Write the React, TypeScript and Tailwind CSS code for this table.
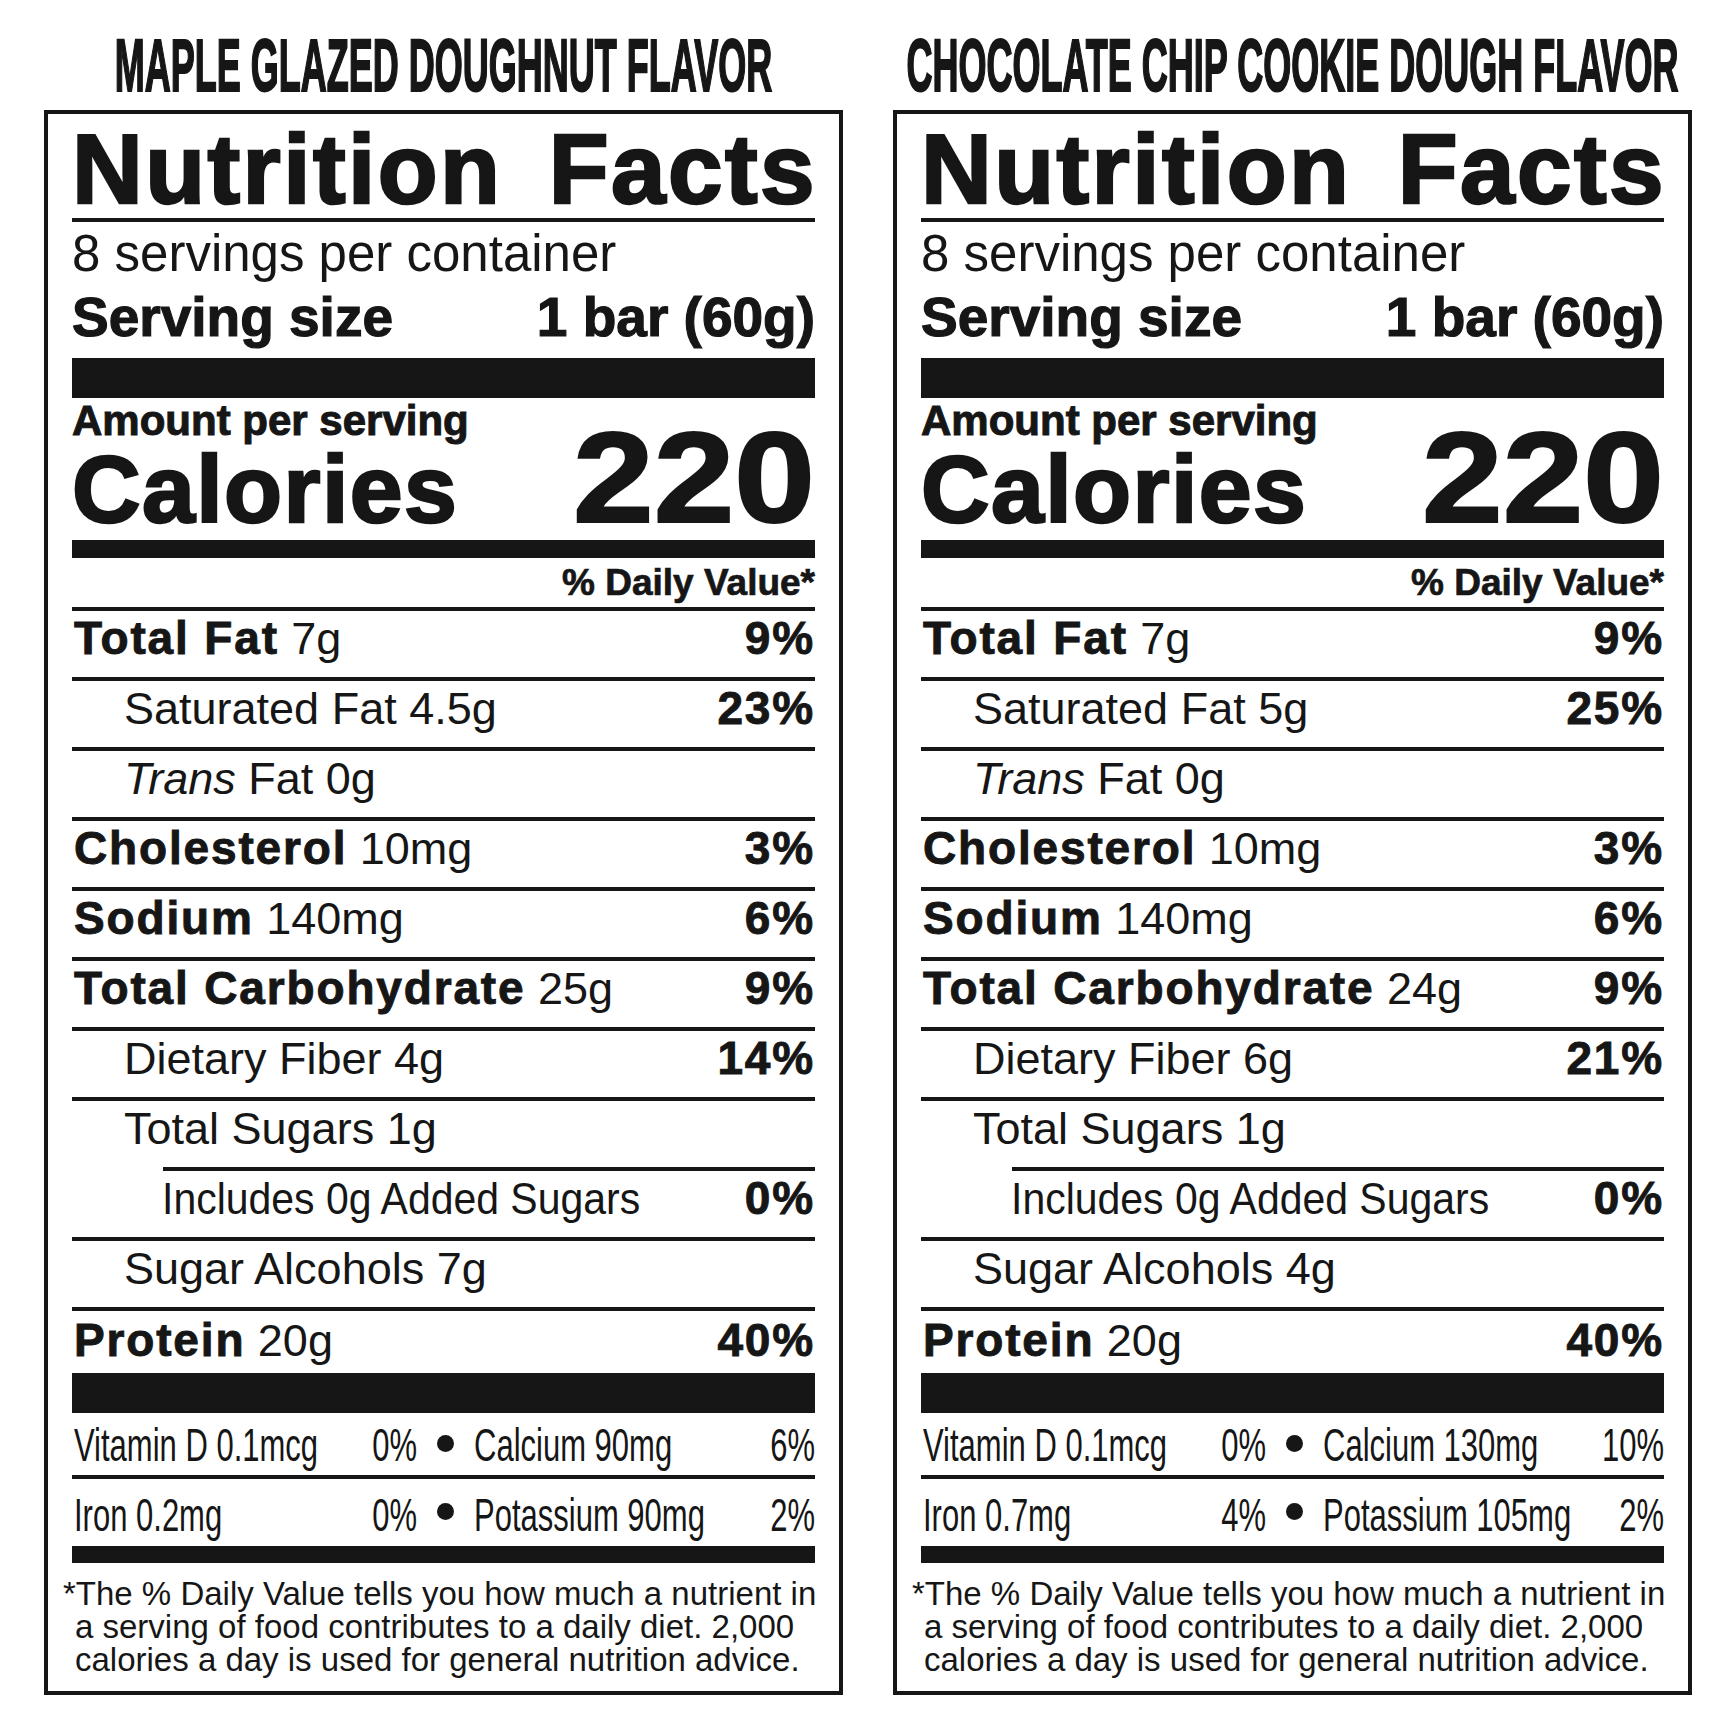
type Nutrient = {
  name: string;
  amount: string;
  dv?: string;
  bold?: boolean;
  italic?: string;
  indent?: 0 | 1 | 2;
};

type Mineral = { name: string; dv: string };

type Label = {
  flavor: string;
  nutrients: Nutrient[];
  vitamins: [Mineral, Mineral][];
};

const labels: Label[] = [
  {
    flavor: 'MAPLE GLAZED DOUGHNUT FLAVOR',
    nutrients: [
      { name: 'Total Fat', amount: '7g', dv: '9%', bold: true },
      { name: 'Saturated Fat', amount: '4.5g', dv: '23%', indent: 1 },
      { name: 'Fat', italic: 'Trans', amount: '0g', indent: 1 },
      { name: 'Cholesterol', amount: '10mg', dv: '3%', bold: true },
      { name: 'Sodium', amount: '140mg', dv: '6%', bold: true },
      { name: 'Total Carbohydrate', amount: '25g', dv: '9%', bold: true },
      { name: 'Dietary Fiber', amount: '4g', dv: '14%', indent: 1 },
      { name: 'Total Sugars', amount: '1g', indent: 1 },
      { name: 'Includes 0g Added Sugars', amount: '', dv: '0%', indent: 2 },
      { name: 'Sugar Alcohols', amount: '7g', indent: 1 },
    ],
    vitamins: [
      [
        { name: 'Vitamin D 0.1mcg', dv: '0%' },
        { name: 'Calcium 90mg', dv: '6%' },
      ],
      [
        { name: 'Iron 0.2mg', dv: '0%' },
        { name: 'Potassium 90mg', dv: '2%' },
      ],
    ],
  },
  {
    flavor: 'CHOCOLATE CHIP COOKIE DOUGH FLAVOR',
    nutrients: [
      { name: 'Total Fat', amount: '7g', dv: '9%', bold: true },
      { name: 'Saturated Fat', amount: '5g', dv: '25%', indent: 1 },
      { name: 'Fat', italic: 'Trans', amount: '0g', indent: 1 },
      { name: 'Cholesterol', amount: '10mg', dv: '3%', bold: true },
      { name: 'Sodium', amount: '140mg', dv: '6%', bold: true },
      { name: 'Total Carbohydrate', amount: '24g', dv: '9%', bold: true },
      { name: 'Dietary Fiber', amount: '6g', dv: '21%', indent: 1 },
      { name: 'Total Sugars', amount: '1g', indent: 1 },
      { name: 'Includes 0g Added Sugars', amount: '', dv: '0%', indent: 2 },
      { name: 'Sugar Alcohols', amount: '4g', indent: 1 },
    ],
    vitamins: [
      [
        { name: 'Vitamin D 0.1mcg', dv: '0%' },
        { name: 'Calcium 130mg', dv: '10%' },
      ],
      [
        { name: 'Iron 0.7mg', dv: '4%' },
        { name: 'Potassium 105mg', dv: '2%' },
      ],
    ],
  },
];

const boldText = 'font-bold tracking-[0.04em] [-webkit-text-stroke:0.9px_#161616]';

function NutrientRow({ n }: { n: Nutrient }) {
  const pad = n.indent === 2 ? 'pl-[90px]' : n.indent === 1 ? 'pl-[52px]' : 'pl-[2px]';
  return (
    <>
      <div className={n.indent === 2 ? 'h-[4px] bg-[#161616] ml-[91px]' : 'h-[4px] bg-[#161616]'} />
      <div className={`flex justify-between h-[66px] pt-[4px] text-[46px] leading-none ${pad}`}>
        <span className="whitespace-nowrap">
          {n.italic && <span className="text-[45px] italic">{n.italic} </span>}
          {n.bold ? (
            <span className={boldText}>{n.name}</span>
          ) : n.indent === 2 ? (
            // the added sugars line is set in a narrower cut on the label
            <span className="inline-block text-[45px] origin-left scale-x-[0.91]">{n.name}</span>
          ) : (
            <span className="text-[45px]">{n.name}</span>
          )}
          {n.amount && <span className="text-[45px]"> {n.amount}</span>}
        </span>
        {n.dv && <span className={boldText}>{n.dv}</span>}
      </div>
    </>
  );
}

// condensed type: a small font stretched upward keeps the real text width
function MineralCell({ m }: { m: Mineral }) {
  return (
    <div className="flex justify-between items-start">
      <span className="inline-block whitespace-nowrap text-[31px] leading-none scale-y-[1.48]">{m.name}</span>
      <span className="inline-block whitespace-nowrap text-[31px] leading-none scale-y-[1.48]">{m.dv}</span>
    </div>
  );
}

function NutritionLabel({ label }: { label: Label }) {
  return (
    <div className="w-[799px] flex flex-col">
      <div className="h-[104px] pt-[49px] flex justify-center">
        <span className="inline-block h-[36px] whitespace-nowrap text-[36px] leading-none font-bold scale-y-[2.04] [-webkit-text-stroke:1px_#161616]">
          {label.flavor}
        </span>
      </div>

      <div className="mt-[6px] border-[4px] border-[#161616] px-[24px] flex flex-col">
        <div className="pt-[6px] flex justify-between text-[98px] leading-none font-bold tracking-[0.025em] [-webkit-text-stroke:2.5px_#161616]">
          <span>Nutrition</span>
          <span className="-mr-[2px]">Facts</span>
        </div>
        <div className="h-[4px] bg-[#161616]" />
        <div className="mt-[6px] h-[52px] text-[51px] leading-[52px] whitespace-nowrap">8 servings per container</div>
        <div className="mt-[10px] flex justify-between text-[55px] leading-none font-bold [-webkit-text-stroke:1.2px_#161616]">
          <span>Serving size</span>
          <span>1 bar (60g)</span>
        </div>
        <div className="mt-[13px] h-[40px] bg-[#161616]" />

        <div className="mt-[2px] flex justify-between items-end">
          <div className="flex flex-col">
            <div className="h-[42px] text-[42px] leading-[42px] font-bold [-webkit-text-stroke:1px_#161616]">Amount per serving</div>
            <div className="h-[95px] text-[95px] leading-[95px] font-bold tracking-[0.015em] [-webkit-text-stroke:2.5px_#161616]">
              Calories
            </div>
          </div>
          <div className="h-[134px] text-[145px] leading-[134px] font-bold origin-bottom scale-y-[0.885] [-webkit-text-stroke:2.5px_#161616]">
            220
          </div>
        </div>
        <div className="mt-[3px] h-[18px] bg-[#161616]" />

        <div className="h-[49px] pt-[6px] text-right text-[37px] leading-none font-bold [-webkit-text-stroke:0.7px_#161616]">
          % Daily Value*
        </div>

        {label.nutrients.map((n, i) => (
          <NutrientRow key={i} n={n} />
        ))}

        <div className="h-[4px] bg-[#161616]" />
        <div className="flex justify-between h-[62px] pt-[6px] pl-[2px] text-[46px] leading-none">
          <span className="whitespace-nowrap">
            <span className={boldText}>Protein</span>
            <span className="text-[45px]"> 20g</span>
          </span>
          <span className={boldText}>40%</span>
        </div>
        <div className="h-[40px] bg-[#161616]" />

        {label.vitamins.map((pair, i) => (
          <div key={i}>
            {i > 0 && <div className="h-[4px] bg-[#161616]" />}
            <div
              className={
                i === 0
                  ? 'grid grid-cols-[343px_57px_1fr] h-[62px] pt-[17px] pl-[2px]'
                  : 'grid grid-cols-[343px_57px_1fr] h-[67px] pt-[21px] pl-[2px]'
              }
            >
              <MineralCell m={pair[0]} />
              <div className="flex justify-center">
                <span className={i === 0 ? 'mt-[5px] w-[17px] h-[17px] rounded-full bg-[#161616]' : 'mt-[3px] w-[17px] h-[17px] rounded-full bg-[#161616]'} />
              </div>
              <MineralCell m={pair[1]} />
            </div>
          </div>
        ))}
        <div className="h-[17px] bg-[#161616]" />

        <div className="-ml-[9px] pl-[12px] -indent-[12px] pt-[14px] pb-[15px] text-[33px] leading-[33px] whitespace-nowrap">
          *The % Daily Value tells you how much a nutrient in
          <br />
          a serving of food contributes to a daily diet. 2,000
          <br />
          calories a day is used for general nutrition advice.
        </div>
      </div>
    </div>
  );
}

export default function App() {
  return (
    <div className="w-[1736px] h-[1736px] bg-white overflow-hidden flex gap-[50px] px-[44px] text-[#161616] font-['Liberation_Sans',Arial,sans-serif]">
      {labels.map((l, i) => (
        <NutritionLabel key={i} label={l} />
      ))}
    </div>
  );
}
